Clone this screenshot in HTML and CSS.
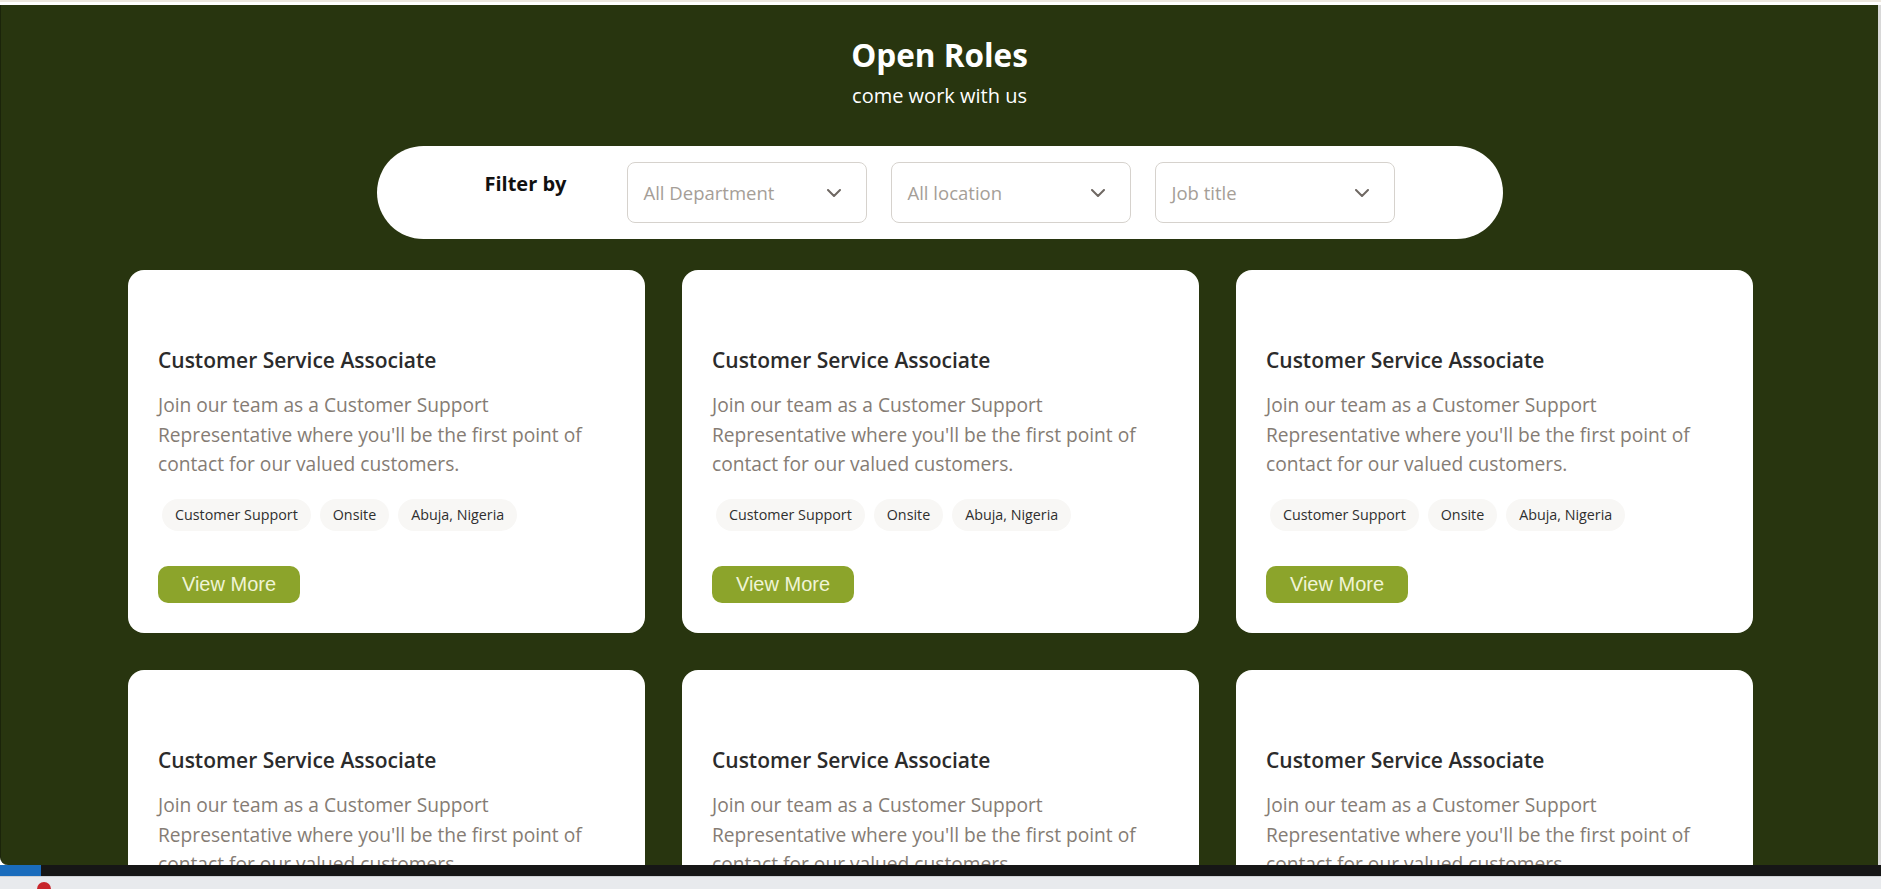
FILE: index.html
```html
<!DOCTYPE html>
<html lang="en">
<head>
<meta charset="utf-8">
<title>Open Roles</title>
<link rel="stylesheet" href="styles.css">
</head>
<body>
<div class="top-strip"></div>
<main class="roles">
  <header class="roles-head">
    <h1 class="roles-title">Open Roles</h1>
    <p class="roles-sub">come work with us</p>
  </header>

  <div class="filter-bar">
    <span class="filter-label">Filter by</span>
    <div class="select"><span>All Department</span><svg class="chev" width="14" height="8" viewBox="0 0 14 8"><polyline points="1,1 7,7 13,1" fill="none" stroke="#6f6863" stroke-width="2" stroke-linecap="round" stroke-linejoin="round"/></svg></div>
    <div class="select"><span>All location</span><svg class="chev" width="14" height="8" viewBox="0 0 14 8"><polyline points="1,1 7,7 13,1" fill="none" stroke="#6f6863" stroke-width="2" stroke-linecap="round" stroke-linejoin="round"/></svg></div>
    <div class="select"><span>Job title</span><svg class="chev" width="14" height="8" viewBox="0 0 14 8"><polyline points="1,1 7,7 13,1" fill="none" stroke="#6f6863" stroke-width="2" stroke-linecap="round" stroke-linejoin="round"/></svg></div>
  </div>

  <section class="cards">
    <article class="card">
      <h2 class="card-title">Customer Service Associate</h2>
      <p class="card-desc">Join our team as a Customer Support Representative where you'll be the first point of contact for our valued customers.</p>
      <ul class="tags"><li>Customer Support</li><li>Onsite</li><li>Abuja, Nigeria</li></ul>
      <button class="btn">View More</button>
    </article>
    <article class="card">
      <h2 class="card-title">Customer Service Associate</h2>
      <p class="card-desc">Join our team as a Customer Support Representative where you'll be the first point of contact for our valued customers.</p>
      <ul class="tags"><li>Customer Support</li><li>Onsite</li><li>Abuja, Nigeria</li></ul>
      <button class="btn">View More</button>
    </article>
    <article class="card">
      <h2 class="card-title">Customer Service Associate</h2>
      <p class="card-desc">Join our team as a Customer Support Representative where you'll be the first point of contact for our valued customers.</p>
      <ul class="tags"><li>Customer Support</li><li>Onsite</li><li>Abuja, Nigeria</li></ul>
      <button class="btn">View More</button>
    </article>
    <article class="card">
      <h2 class="card-title">Customer Service Associate</h2>
      <p class="card-desc">Join our team as a Customer Support Representative where you'll be the first point of contact for our valued customers.</p>
      <ul class="tags"><li>Customer Support</li><li>Onsite</li><li>Abuja, Nigeria</li></ul>
      <button class="btn">View More</button>
    </article>
    <article class="card">
      <h2 class="card-title">Customer Service Associate</h2>
      <p class="card-desc">Join our team as a Customer Support Representative where you'll be the first point of contact for our valued customers.</p>
      <ul class="tags"><li>Customer Support</li><li>Onsite</li><li>Abuja, Nigeria</li></ul>
      <button class="btn">View More</button>
    </article>
    <article class="card">
      <h2 class="card-title">Customer Service Associate</h2>
      <p class="card-desc">Join our team as a Customer Support Representative where you'll be the first point of contact for our valued customers.</p>
      <ul class="tags"><li>Customer Support</li><li>Onsite</li><li>Abuja, Nigeria</li></ul>
      <button class="btn">View More</button>
    </article>
  </section>
</main>
<div class="taskbar"><span class="task-start"></span></div>
<div class="tray"><span class="tray-dot"></span></div>
</body>
</html>
```

FILE: styles.css
```css
* { box-sizing: border-box; }
html, body { margin: 0; padding: 0; }
body {
  width: 1881px;
  height: 889px;
  overflow: hidden;
  display: flex;
  flex-direction: column;
  font-family: "Open Sans", "Noto Sans", sans-serif;
  background: #ffffff;
}
.top-strip {
  height: 5px;
  flex: none;
  border-top: 2px solid #ece7de;
  background: #ffffff;
}
.roles {
  height: 860px;
  flex: none;
  overflow: hidden;
  background: #28350f;
  border-left: 1px solid #1b240a;
  border-right: 3px solid #d8d8d8;
  border-bottom-left-radius: 8px;
  padding-top: 30px;
}
.roles-head { text-align: center; color: #ffffff; }
.roles-title {
  margin: 0;
  font-size: 31.5px;
  line-height: 40px;
  font-weight: 700;
}
.roles-sub {
  margin: 7px 0 0;
  font-size: 20px;
  line-height: 28px;
}
.filter-bar {
  width: 1126px;
  margin: 36px auto 0;
  height: 93px;
  background: #ffffff;
  border-radius: 47px;
  padding: 16px 108px;
  display: flex;
  align-items: flex-start;
}
.filter-label {
  width: 142px;
  flex: none;
  padding-top: 8px;
  font-size: 20px;
  line-height: 28px;
  font-weight: 700;
  color: #111111;
}
.select {
  width: 240px;
  height: 61px;
  flex: none;
  margin-right: 24px;
  border: 1px solid #d6d2cd;
  border-radius: 8px;
  display: flex;
  align-items: center;
  justify-content: space-between;
  padding: 0 25px 0 16px;
  font-size: 18.5px;
  color: #a59e97;
}
.select:last-child { margin-right: 0; }
.chev { display: block; }
.cards {
  margin-top: 31px;
  padding-left: 127px;
  display: grid;
  grid-template-columns: repeat(3, 517px);
  gap: 37px;
}
.card {
  height: 363px;
  background: #ffffff;
  border-radius: 16px;
  padding: 75px 30px 30px;
  display: flex;
  flex-direction: column;
  align-items: flex-start;
}
.card-title {
  margin: 0;
  font-size: 21px;
  line-height: 30px;
  font-weight: 600;
  color: #2b2b2b;
}
.card-desc {
  margin: 15px 0 0;
  font-size: 19.2px;
  line-height: 29.6px;
  color: #857c74;
}
.tags {
  list-style: none;
  margin: 20px 0 0 4px;
  padding: 0;
  display: flex;
  gap: 9px;
}
.tags li {
  height: 32px;
  line-height: 32px;
  padding: 0 13px;
  border-radius: 16px;
  background: #f8f7f5;
  font-size: 14.3px;
  color: #2f2f2f;
}
.btn {
  margin-top: 35px;
  width: 142px;
  height: 37px;
  border: 0;
  border-radius: 10px;
  background: #8ca42b;
  color: #f0f4d6;
  font-family: "Liberation Sans", Arial, sans-serif;
  font-size: 20px;
  padding: 0;
}
.taskbar {
  height: 11px;
  flex: none;
  background: #161616;
  display: flex;
}
.task-start {
  width: 41px;
  height: 11px;
  background: #1a6cbc;
}
.tray {
  flex: 1;
  background: #e8eaed;
  border-top: 1px solid #cfd2d6;
  padding-left: 37px;
  padding-top: 5px;
  overflow: hidden;
}
.tray-dot {
  display: block;
  width: 14px;
  height: 14px;
  border-radius: 50%;
  background: #c8252b;
}
```
